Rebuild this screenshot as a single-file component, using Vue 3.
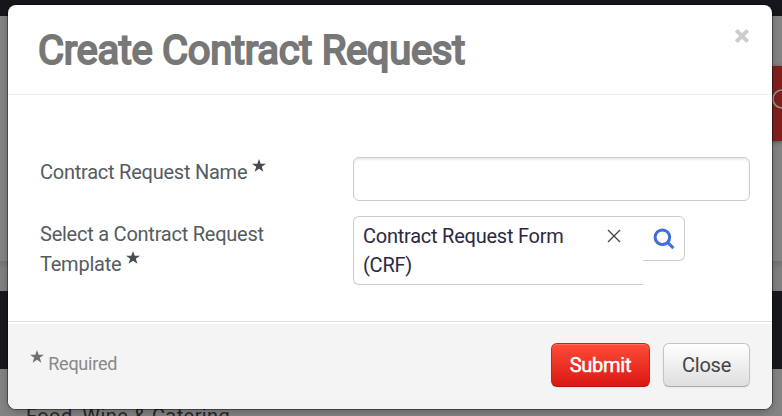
<template>
    <div class="page">
        <div class="backdrop-page" aria-hidden="true">
            <div class="top-bar"></div>
            <div class="hero">
                <div class="side-tab">
                    <svg width="20" height="20" viewBox="0 0 20 20"><circle cx="10" cy="10" r="9" /></svg>
                </div>
            </div>
            <div class="strip"></div>
            <div class="nav-bar"></div>
            <div class="listing">Food, Wine &amp; Catering</div>
        </div>

        <form class="modal" role="dialog" aria-labelledby="modal-title" @submit.prevent>
            <header class="modal-header">
                <h1 id="modal-title">Create Contract Request</h1>
                <button type="button" class="dismiss" aria-label="Close dialog">
                    <svg width="16" height="16" viewBox="0 0 16 16"><path d="M2.3 2.3 13.7 13.7M13.7 2.3 2.3 13.7" /></svg>
                </button>
            </header>

            <div class="modal-body">
                <div class="row">
                    <label for="request-name">Contract Request Name <svg class="star" viewBox="0 0 14 13"><path :d="starPath" /></svg></label>
                    <input id="request-name" v-model="requestName" type="text" class="name-input" />
                </div>
                <div class="row">
                    <label class="template-label">Select a Contract Request Template <svg class="star" viewBox="0 0 14 13"><path :d="starPath" /></svg></label>
                    <div class="picker">
                        <div class="picker-value">
                            <span>{{ template }}</span>
                            <button type="button" class="clear" aria-label="Clear" @click="template = ''">
                                <svg width="14" height="14" viewBox="0 0 14 14"><path d="M1 1 13 13M13 1 1 13" /></svg>
                            </button>
                        </div>
                        <button type="button" class="search" aria-label="Search">
                            <svg width="22" height="22" viewBox="0 0 22 22">
                                <circle cx="9.4" cy="9.2" r="7.3" />
                                <path d="M14.6 14.4 20.4 20.1" />
                            </svg>
                        </button>
                    </div>
                </div>
            </div>

            <footer class="modal-footer">
                <div class="required"><svg class="star" viewBox="0 0 14 13"><path :d="starPath" /></svg> Required</div>
                <div class="actions">
                    <button type="submit" class="btn btn-primary">Submit</button>
                    <button type="button" class="btn">Close</button>
                </div>
            </footer>
        </form>
    </div>
</template>

<script setup>
import { ref } from 'vue';

const requestName = ref('');
const template = ref('Contract Request Form (CRF)');

// Shared by the field labels and the footer note
const starPath = 'M7 0 8.7 4.7H14L9.8 7.8 11.4 12.8 7 9.8 2.6 12.8 4.2 7.8 0 4.7H5.3Z';
</script>

<style>
body {
    overflow: hidden;
}
</style>

<style scoped>
.page {
    position: relative;
    width: 782px;
    height: 416px;
    overflow: hidden;
    font-family: Roboto, "Liberation Sans", sans-serif;
    font-size: 20px;
    letter-spacing: -0.24px;
    color: #555b60;
}

.page * {
    box-sizing: border-box;
}

button {
    font-family: inherit;
    cursor: pointer;
}

.backdrop-page {
    height: 416px;
    background: #848484;
}

.top-bar {
    height: 16px;
    background: #15171a;
}

.hero {
    height: 245px;
    padding-top: 50px;
}

.side-tab {
    width: 11px;
    height: 75px;
    margin-left: auto;
    padding: 23px 0 0 1px;
    overflow: hidden;
    background: #7f211a;
    box-shadow: 0 1px 4px rgba(0, 0, 0, 0.4);
}

.side-tab svg {
    display: block;
    fill: none;
    stroke: #959595;
    stroke-width: 1.6;
}

.strip {
    height: 30px;
    background: linear-gradient(#737373, #808080 8px);
}

.nav-bar {
    height: 78px;
    background: #17191c;
}

.listing {
    height: 47px;
    padding: 35px 0 0 26px;
    font-size: 20px;
    line-height: 24px;
    letter-spacing: 0.42px;
    color: #252525;
}

.modal {
    position: absolute;
    top: 5px;
    left: 8px;
    width: 764px;
    height: 404px;
    display: flex;
    flex-direction: column;
    overflow: hidden;
    border-radius: 8px;
    background: #fff;
    box-shadow: 0 0 0 1px rgba(0, 0, 0, 0.4), 0 3px 8px rgba(0, 0, 0, 0.25);
}

.modal-header {
    display: flex;
    justify-content: space-between;
    align-items: flex-start;
    height: 90px;
    padding: 20px 22px 0 30px;
    border-bottom: 1px solid #eee;
}

h1 {
    margin: 0;
    padding-top: 1px;
    font-size: 40px;
    font-weight: 400;
    line-height: 50px;
    letter-spacing: -0.33px;
    color: #777;
    -webkit-text-stroke: 2px #777;
}

.dismiss {
    margin-top: 3px;
    padding: 0;
    border: 0;
    background: none;
}

.dismiss svg {
    display: block;
    fill: none;
    stroke: #ccc;
    stroke-width: 4;
}

.modal-body {
    display: flex;
    flex-direction: column;
    gap: 15px;
    height: 226px;
    padding: 62px 22px 0 32px;
}

.row {
    display: flex;
    align-items: flex-start;
}

label {
    width: 313px;
    padding-right: 60px;
    line-height: 30px;
}

.template-label {
    padding-top: 3px;
}

.star {
    width: 14px;
    height: 13px;
    vertical-align: 7px;
    fill: #464c51;
}

.name-input {
    width: 397px;
    height: 44px;
    padding: 0 10px;
    border: 1px solid #ccc;
    border-radius: 6px;
    font: inherit;
    outline: none;
    box-shadow: inset 0 2px 2px rgba(0, 0, 0, 0.075);
}

.picker {
    display: flex;
    align-items: flex-start;
}

.picker-value {
    display: flex;
    justify-content: space-between;
    align-items: flex-start;
    width: 290px;
    height: 69px;
    padding: 5px 22px 0 9px;
    border: 1px solid #ccc;
    border-right: 0;
    border-radius: 6px 0 0 6px;
    line-height: 29px;
    color: #2c2841;
}

.picker-value span {
    width: 210px;
}

.clear {
    margin-top: 7px;
    padding: 0;
    border: 0;
    background: none;
}

.clear svg {
    display: block;
    fill: none;
    stroke: #444;
    stroke-width: 1.3;
}

.search {
    display: flex;
    align-items: flex-start;
    width: 42px;
    height: 45px;
    padding: 11px 0 0 10px;
    border: 1px solid #ccc;
    border-left: 0;
    border-radius: 0 6px 6px 0;
    background: #fff;
}

.search svg {
    display: block;
    fill: none;
    stroke: #3c6fdd;
    stroke-width: 3;
}

.modal-footer {
    display: flex;
    flex: 1;
    justify-content: space-between;
    align-items: flex-start;
    padding: 21px 22px 0;
    border-top: 1px solid #ddd;
    background: #f4f4f4;
    box-shadow: inset 0 2px 0 #fff;
}

.required {
    padding-top: 7px;
    font-size: 18px;
    line-height: 22px;
    color: #888;
}

.required .star {
    fill: #707070;
}

.actions {
    display: flex;
    gap: 13px;
}

.btn {
    height: 44px;
    width: 87px;
    padding: 0;
    border: 1px solid #c4c4c4;
    border-bottom-color: #aaa;
    border-radius: 6px;
    background: linear-gradient(#fff, #dedee0);
    font-size: 20px;
    line-height: 42px;
    letter-spacing: -0.25px;
    color: #444;
    box-shadow: inset 0 1px 0 rgba(255, 255, 255, 0.2), 0 1px 2px rgba(0, 0, 0, 0.05);
}

.btn-primary {
    width: 99px;
    border-color: #d22018 #d22018 #b51410;
    background: linear-gradient(#ff4c37, #d91815);
    color: #fff;
    -webkit-text-stroke: 0.5px #fff;
    text-shadow: 0 -1px 0 rgba(0, 0, 0, 0.15);
}
</style>
